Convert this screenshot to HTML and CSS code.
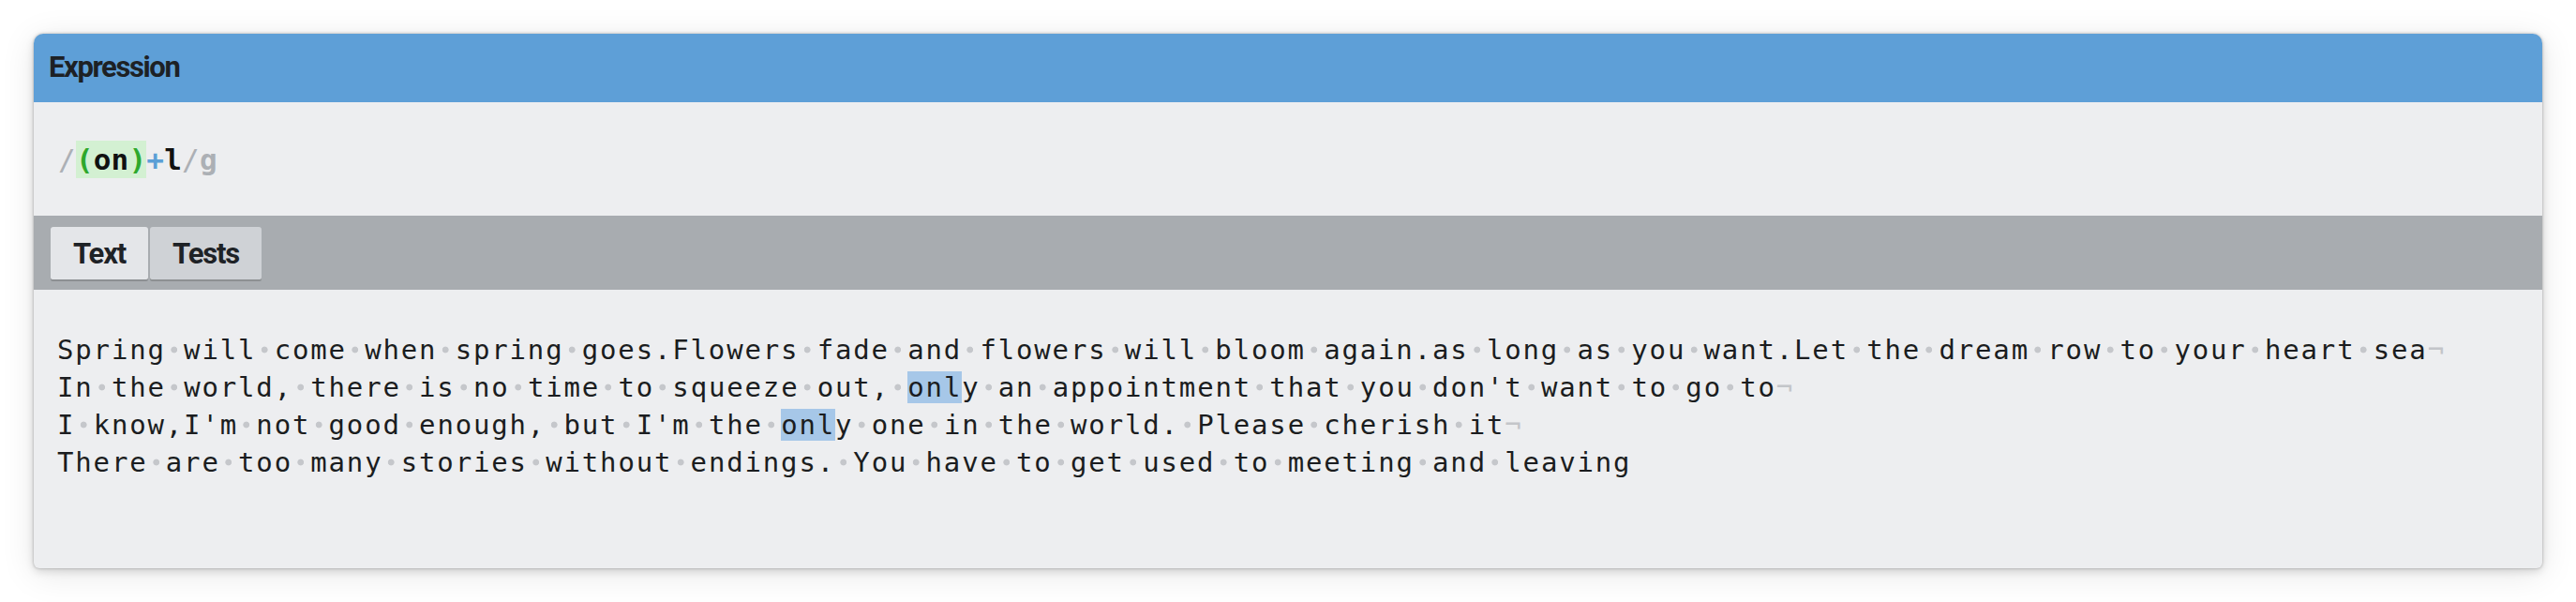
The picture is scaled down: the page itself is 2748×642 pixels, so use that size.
FILE: index.html
```html
<!DOCTYPE html>
<html>
<head>
<meta charset="utf-8">
<link rel="stylesheet" href="styles.css">
</head>
<body>
<div class="card">
  <div class="hdr">Expression</div>
  <div class="expr"><span class="delim">/</span><span class="grp"><span class="paren">(</span>on<span class="paren">)</span></span><span class="quant">+</span>l<span class="delim">/</span><span class="flag">g</span></div>
  <div class="tabbar">
    <div class="tab active">Text</div>
    <div class="tab">Tests</div>
  </div>
  <div class="text">
    <div class="line">Spring<span class="sp">·</span>will<span class="sp">·</span>come<span class="sp">·</span>when<span class="sp">·</span>spring<span class="sp">·</span>goes.Flowers<span class="sp">·</span>fade<span class="sp">·</span>and<span class="sp">·</span>flowers<span class="sp">·</span>will<span class="sp">·</span>bloom<span class="sp">·</span>again.as<span class="sp">·</span>long<span class="sp">·</span>as<span class="sp">·</span>you<span class="sp">·</span>want.Let<span class="sp">·</span>the<span class="sp">·</span>dream<span class="sp">·</span>row<span class="sp">·</span>to<span class="sp">·</span>your<span class="sp">·</span>heart<span class="sp">·</span>sea<span class="eol">¬</span></div>
    <div class="line">In<span class="sp">·</span>the<span class="sp">·</span>world,<span class="sp">·</span>there<span class="sp">·</span>is<span class="sp">·</span>no<span class="sp">·</span>time<span class="sp">·</span>to<span class="sp">·</span>squeeze<span class="sp">·</span>out,<span class="sp">·</span><span class="m">onl</span>y<span class="sp">·</span>an<span class="sp">·</span>appointment<span class="sp">·</span>that<span class="sp">·</span>you<span class="sp">·</span>don't<span class="sp">·</span>want<span class="sp">·</span>to<span class="sp">·</span>go<span class="sp">·</span>to<span class="eol">¬</span></div>
    <div class="line">I<span class="sp">·</span>know,I'm<span class="sp">·</span>not<span class="sp">·</span>good<span class="sp">·</span>enough,<span class="sp">·</span>but<span class="sp">·</span>I'm<span class="sp">·</span>the<span class="sp">·</span><span class="m">onl</span>y<span class="sp">·</span>one<span class="sp">·</span>in<span class="sp">·</span>the<span class="sp">·</span>world.<span class="sp">·</span>Please<span class="sp">·</span>cherish<span class="sp">·</span>it<span class="eol">¬</span></div>
    <div class="line">There<span class="sp">·</span>are<span class="sp">·</span>too<span class="sp">·</span>many<span class="sp">·</span>stories<span class="sp">·</span>without<span class="sp">·</span>endings.<span class="sp">·</span>You<span class="sp">·</span>have<span class="sp">·</span>to<span class="sp">·</span>get<span class="sp">·</span>used<span class="sp">·</span>to<span class="sp">·</span>meeting<span class="sp">·</span>and<span class="sp">·</span>leaving</div>
  </div>
</div>
</body>
</html>
```
FILE: styles.css
```css
html, body {
  margin: 0;
  padding: 0;
  background: #ffffff;
}
body {
  padding: 36px;
}
.card {
  height: 570px;
  display: flex;
  flex-direction: column;
  border-radius: 10px 10px 6px 6px;
  overflow: hidden;
  background: #edeef0;
  box-shadow: 0 0 3px rgba(0,0,0,0.28), 0 3px 10px rgba(0,0,0,0.14), 0 6px 36px rgba(0,0,0,0.10);
}
.hdr {
  height: 73px;
  flex: none;
  display: flex;
  align-items: center;
  padding-left: 16px;
  padding-bottom: 3px;
  box-sizing: border-box;
  background: #5e9fd7;
  color: #1d2125;
  font-family: Roboto, "Liberation Sans", sans-serif;
  font-weight: bold;
  font-size: 31px;
  letter-spacing: -1.4px;
}
.expr {
  height: 121px;
  flex: none;
  display: flex;
  align-items: center;
  padding-left: 26px;
  box-sizing: border-box;
  font-family: "DejaVu Sans Mono", monospace;
  font-weight: bold;
  font-size: 31px;
  letter-spacing: 0.2px;
  color: #111;
  white-space: pre;
}
.delim, .flag {
  color: #acb0b5;
}
.delim {
  font-weight: normal;
}
.grp {
  background: #d3f0d2;
  padding: 2px 0;
}
.paren {
  color: #2ea82c;
}
.quant {
  color: #5b9fd6;
}
.tabbar {
  height: 79px;
  flex: none;
  display: flex;
  gap: 2px;
  padding: 12px 0 0 18px;
  box-sizing: border-box;
  background: #a8acb0;
}
.tab {
  height: 56px;
  padding: 0 24px;
  display: flex;
  align-items: center;
  border-radius: 3px 3px 2px 2px;
  background: #cfd2d6;
  box-shadow: 0 2px 0 rgba(0,0,0,0.16);
  color: #1e2226;
  font-family: Roboto, "Liberation Sans", sans-serif;
  font-weight: bold;
  font-size: 31px;
  letter-spacing: -1.2px;
}
.tab.active {
  background: #e4e6e9;
}
.text {
  flex: 1;
  padding: 44px 0 0 25px;
  font-family: "DejaVu Sans Mono", monospace;
  font-size: 29px;
  letter-spacing: 1.84px;
  line-height: 40px;
  color: #1b1d20;
}
.line {
  white-space: pre;
  height: 40px;
}
.sp {
  color: transparent;
  background: radial-gradient(circle at 46% 50%, #c5c7cb 0, #c5c7cb 3px, rgba(197,199,203,0) 3.8px);
}
.eol {
  color: #c3c5c9;
}
.m {
  background: #a6c7e8;
}
```
